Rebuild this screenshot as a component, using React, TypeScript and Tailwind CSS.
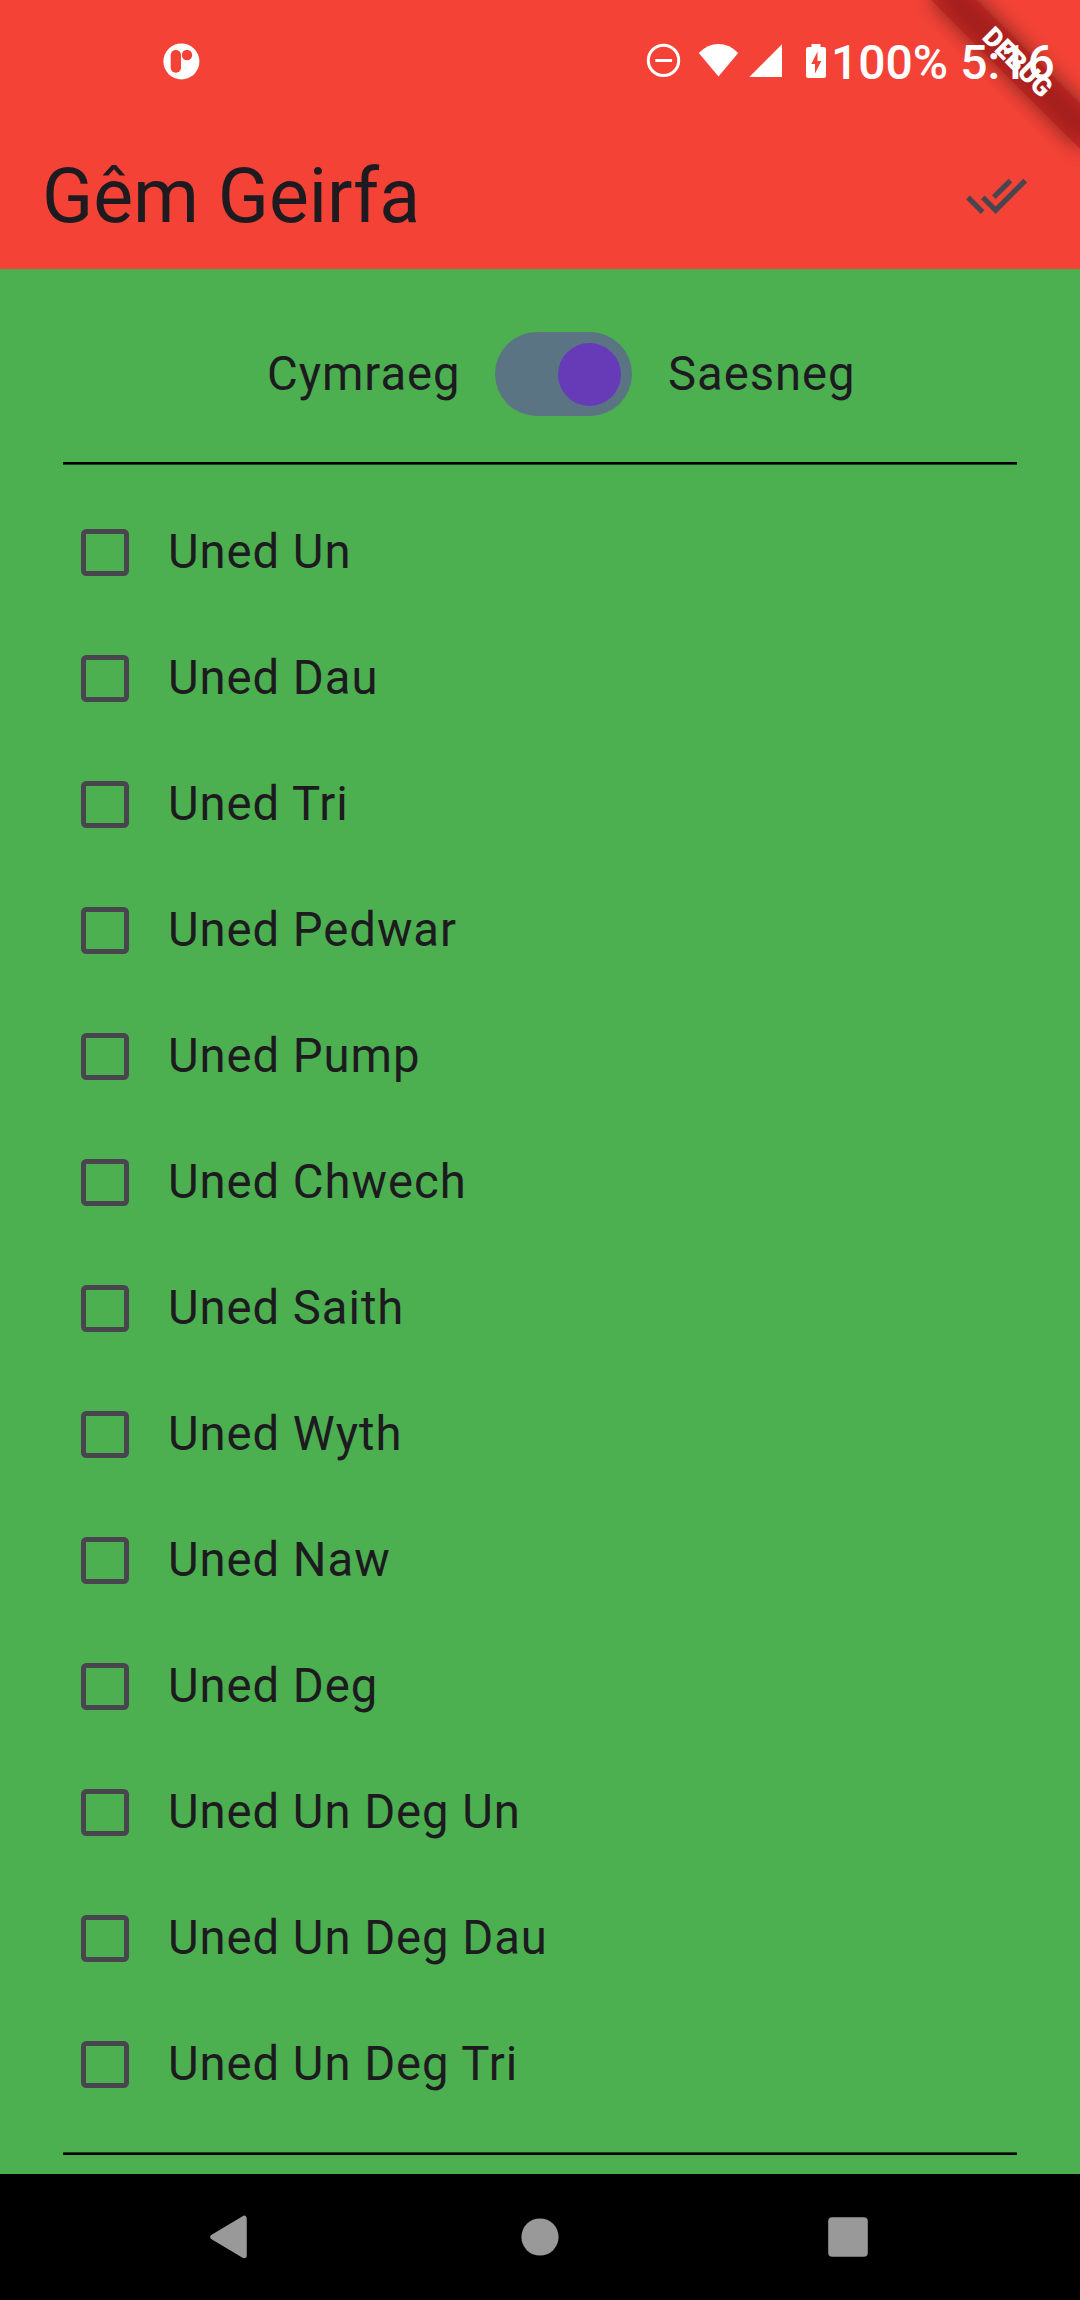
import { useState } from 'react';
import { MdDoneAll } from 'react-icons/md';

const units = [
    'Uned Un',
    'Uned Dau',
    'Uned Tri',
    'Uned Pedwar',
    'Uned Pump',
    'Uned Chwech',
    'Uned Saith',
    'Uned Wyth',
    'Uned Naw',
    'Uned Deg',
    'Uned Un Deg Un',
    'Uned Un Deg Dau',
    'Uned Un Deg Tri',
];

function StatusBar() {
    return (
        <div className="relative z-20 flex h-[126px] items-start pl-[163px] text-white">
            <svg className="mt-[43px] h-[37px] w-[37px] shrink-0" viewBox="0 0 37 37">
                <circle cx="18.4" cy="18.4" r="18" fill="currentColor" />
                <rect x="7.7" y="7" width="10.3" height="22.7" rx="5" fill="#f44336" />
                <circle cx="24" cy="12" r="5.2" fill="#f44336" />
            </svg>
            {/* do not disturb, wifi, signal, battery */}
            <svg className="mt-[43px] ml-[446px] h-[37px] w-[182px] shrink-0" viewBox="646 43 182 37" fill="currentColor">
                <circle cx="663.5" cy="60.4" r="15.2" fill="none" stroke="currentColor" strokeWidth="3" />
                <rect x="655.3" y="59" width="16.8" height="3" />
                <path d="M718.5 76.6 L698.8 53 Q707.5 44 718.5 44 Q729.5 44 738.2 53 Z" />
                <path d="M749.3 77 L782 44.2 V77 Z" />
                <path
                    fillRule="evenodd"
                    d="M811.5 44 h9 v3 h3.3 a2.2 2.2 0 0 1 2.2 2.2 V75.8 a2.2 2.2 0 0 1 -2.2 2.2 H808.2 a2.2 2.2 0 0 1 -2.2 -2.2 V49.2 a2.2 2.2 0 0 1 2.2 -2.2 H811.5 Z M817.5 51.5 L811.3 64 H815 V73.5 L821.3 61 H817.5 Z"
                />
            </svg>
            <div className="mt-[35px] ml-[3px] flex gap-[12px] text-[48px] leading-[56px] font-medium whitespace-nowrap">
                <span>100%</span>
                <span>5:16</span>
            </div>
        </div>
    );
}

function DebugBanner() {
    return (
        <div className="pointer-events-none absolute top-0 right-0 z-10 h-[300px] w-[300px] overflow-hidden">
            <div className="absolute top-[47.36px] left-[131.9px] h-[31.5px] w-[210px] rotate-45">
                <div className="absolute inset-0 bg-black/50 blur-[10.4px]" />
                <div className="absolute inset-0 bg-[#b71c1c]/63" />
                <div className="relative text-center text-[26.775px] leading-[31.5px] font-black text-white">DEBUG</div>
            </div>
        </div>
    );
}

function AppBar() {
    return (
        <div className="flex h-[139px] items-center justify-between pr-[52px] pl-[42px]">
            <h1 className="text-[75.2px] leading-[92px] text-[#1d1b20]">Gêm Geirfa</h1>
            <button type="button">
                <MdDoneAll className="h-[63px] w-[63px] text-[#49454f]" />
            </button>
        </div>
    );
}

function Checkbox({ label, checked, onChange }: { label: string; checked: boolean; onChange: () => void }) {
    return (
        <label className="flex h-[126px] items-center pl-[81.375px]">
            <input type="checkbox" className="sr-only" checked={checked} onChange={onChange} />
            <span
                className={
                    checked
                        ? 'mt-px h-[47.25px] w-[47.25px] rounded-[5.25px] bg-[#673ab7]'
                        : 'mt-px h-[47.25px] w-[47.25px] rounded-[5.25px] border-[5.25px] border-[#49454f]'
                }
            />
            <span className="ml-[39.375px] text-[47.25px] leading-[63px] tracking-[0.94px]">{label}</span>
        </label>
    );
}

export default function App() {
    const [english, setEnglish] = useState(true);
    const [selected, setSelected] = useState<string[]>([]);

    const toggle = (unit: string) => {
        setSelected(prev => (prev.includes(unit) ? prev.filter(u => u !== unit) : [...prev, unit]));
    };

    return (
        <div className="relative flex h-[2300px] w-[1080px] flex-col overflow-hidden bg-[#4caf50] font-[Roboto,sans-serif] text-[#1d1b20]">
            <header className="h-[269px] shrink-0 bg-[#f44336]">
                <StatusBar />
                <AppBar />
            </header>
            <DebugBanner />

            <main className="h-[1905px] shrink-0">
                <div className="flex h-[193px] items-center pt-[17px] pl-[267px] text-[47.25px] leading-[63px] tracking-[0.94px]">
                    <span className="w-[228px]">Cymraeg</span>
                    <button
                        type="button"
                        onClick={() => setEnglish(!english)}
                        className={
                            english
                                ? 'flex h-[84px] w-[136.5px] items-center justify-end rounded-full bg-[#5b7484] px-[10.5px]'
                                : 'flex h-[84px] w-[136.5px] items-center justify-start rounded-full bg-[#5b7484] px-[10.5px]'
                        }
                    >
                        <span className="h-[63px] w-[63px] rounded-full bg-[#673ab7]" />
                    </button>
                    <span className="ml-[36.5px]">Saesneg</span>
                </div>

                <div className="mx-[63px] h-[3px] border-b border-[#1d421e] bg-black" />
                <div className="h-[1687px] pt-[24px]">
                    {units.map(unit => (
                        <Checkbox key={unit} label={unit} checked={selected.includes(unit)} onChange={() => toggle(unit)} />
                    ))}
                </div>
                <div className="mx-[63px] h-[3px] border-t border-[#1d421e] bg-black" />
            </main>

            <nav className="h-[126px] shrink-0 bg-black">
                <svg className="h-[126px] w-[1080px]" viewBox="0 0 1080 126" fill="#999">
                    <path d="M213 63 L244 44.5 V81.5 Z" stroke="#999" strokeWidth="5.5" strokeLinejoin="round" />
                    <circle cx="540" cy="63" r="18.6" />
                    <rect x="828.2" y="43.2" width="39.6" height="39.6" rx="4" />
                </svg>
            </nav>
        </div>
    );
}
